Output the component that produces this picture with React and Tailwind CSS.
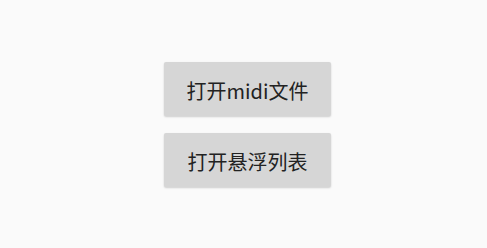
import React from 'react';

const buttons = ['打开midi文件', '打开悬浮列表'];

const App = () => {
  return (
    <div className="w-[487px] h-[248px] bg-[#fafafa] flex flex-col items-center justify-center gap-[17px] pl-[8px]">
      {buttons.map((label) => (
        <button
          key={label}
          className="w-[167px] h-[54px] bg-[#d6d6d6] rounded-[2px] shadow-[0_1px_2px_rgba(0,0,0,0.18)] text-[20px] text-[#222] pt-[4px] font-['Noto_Sans_CJK_SC','Noto_Sans',sans-serif]"
        >
          {label}
        </button>
      ))}
    </div>
  );
};

export default App;
